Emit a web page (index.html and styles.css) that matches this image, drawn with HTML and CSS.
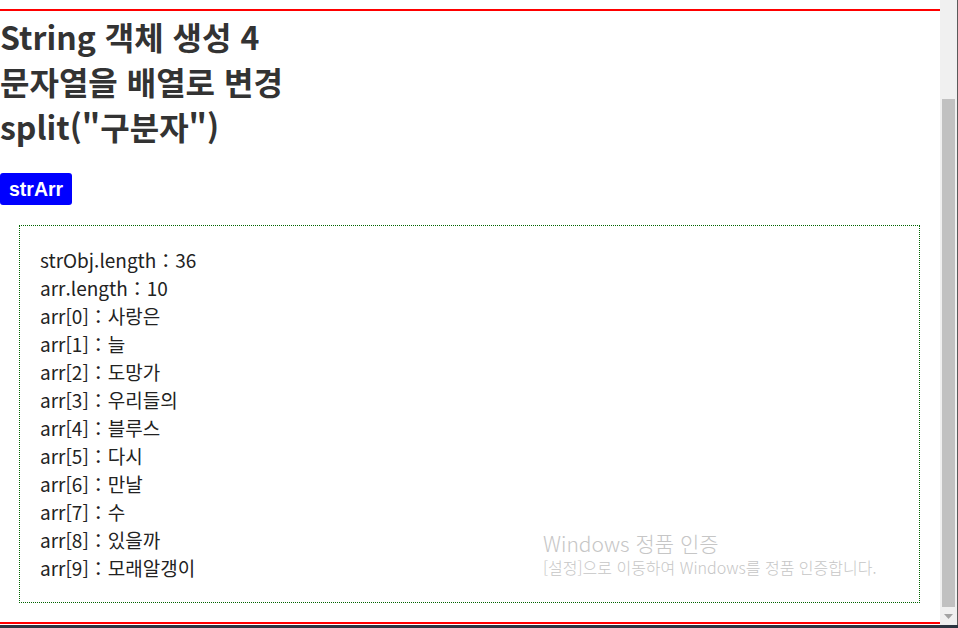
FILE: index.html
```html
<!DOCTYPE html>
<html lang="ko">
<head>
<meta charset="utf-8">
<title>String 객체 생성 4</title>
<link rel="stylesheet" href="styles.css">
</head>
<body>
<div class="window">
  <div class="viewport">
    <div class="rule-top"></div>
    <h1 class="title">String 객체 생성 4<br>문자열을 배열로 변경<br>split("구분자")</h1>
    <button class="btn">strArr</button>
    <div class="output">
      <p>strObj.length：36</p>
      <p>arr.length：10</p>
      <p>arr[0]：사랑은</p>
      <p>arr[1]：늘</p>
      <p>arr[2]：도망가</p>
      <p>arr[3]：우리들의</p>
      <p>arr[4]：블루스</p>
      <p>arr[5]：다시</p>
      <p>arr[6]：만날</p>
      <p>arr[7]：수</p>
      <p>arr[8]：있을까</p>
      <p>arr[9]：모래알갱이</p>
    </div>
    <div class="rule-bottom"></div>
    <div class="watermark">
      <div class="wm-title">Windows 정품 인증</div>
      <div class="wm-sub">[설정]으로 이동하여 Windows를 정품 인증합니다.</div>
    </div>
  </div>
  <div class="scrollbar">
    <div class="sb-track"><div class="sb-thumb"></div></div>
    <div class="sb-arrow"><svg width="9" height="5" viewBox="0 0 9 5"><path d="M0 0H9L4.5 5Z" fill="#a3a3a3"/></svg></div>
  </div>
  <div class="edge"></div>
</div>
<div class="taskbar"></div>
</body>
</html>
```

FILE: styles.css
```css
html, body {
  margin: 0;
  padding: 0;
  height: 100%;
  overflow: hidden;
  background: #fff;
}
body {
  display: flex;
  flex-direction: column;
  font-family: "Noto Sans CJK KR", "Noto Sans", sans-serif;
}
.window {
  display: flex;
  height: 625px;
}
.viewport {
  position: relative;
  flex: 1;
  overflow: hidden;
  display: flex;
  flex-direction: column;
  align-items: flex-start;
}
.rule-top {
  align-self: stretch;
  margin-top: 9px;
  height: 2px;
  background: #ff0000;
}
.title {
  margin: 3px 0 0 0;
  font-size: 32px;
  line-height: 45px;
  font-weight: 700;
  color: #333;
}
.btn {
  margin-top: 24px;
  height: 32px;
  padding: 0 9px;
  border: none;
  border-radius: 3px;
  background: #0000ff;
  color: #fff;
  font-family: "Liberation Sans", Arial, sans-serif;
  font-weight: 700;
  font-size: 19.5px;
}
.output {
  align-self: stretch;
  margin: 20px 20px 0 19px;
  padding: 20px;
  border: 1px dotted #006400;
  color: #222;
  font-size: 19px;
  line-height: 28px;
}
.output p {
  margin: 0;
}
.rule-bottom {
  align-self: stretch;
  margin-top: auto;
  margin-bottom: 1px;
  height: 2px;
  background: #ff0000;
}
.watermark {
  position: absolute;
  left: 543px;
  top: 529px;
  color: #c6c6c6;
  font-family: "Noto Sans CJK KR", sans-serif;
  font-weight: 300;
}
.wm-title {
  font-size: 21px;
  line-height: 28px;
}
.wm-sub {
  font-size: 16px;
  line-height: 20px;
}
.scrollbar {
  width: 17px;
  background: #f0f0f0;
  display: flex;
  flex-direction: column;
}
.sb-track {
  flex: 1;
  display: flex;
  flex-direction: column;
  padding: 99px 2px 0 2px;
}
.sb-thumb {
  height: 508px;
  background: #c1c1c1;
}
.sb-arrow {
  height: 17px;
  display: flex;
  align-items: center;
  justify-content: center;
}
.edge {
  width: 1px;
  background: #5a5a5a;
}
.taskbar {
  height: 3px;
  background: #2b3440;
}
```
